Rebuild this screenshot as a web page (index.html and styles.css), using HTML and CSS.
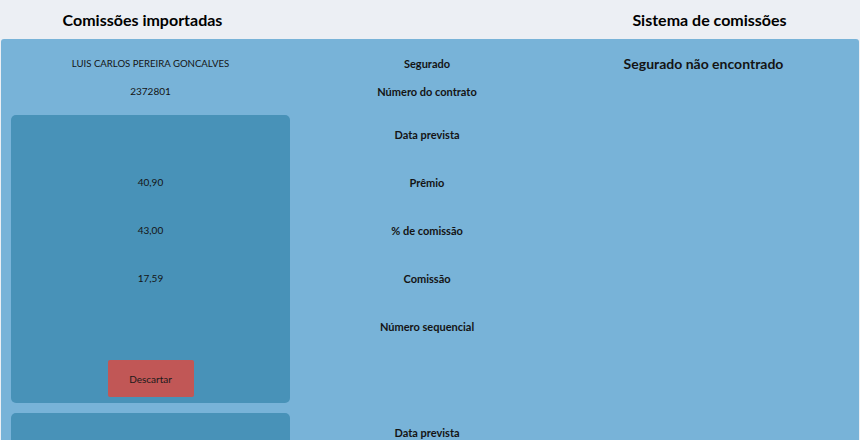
FILE: index.html
```html
<!DOCTYPE html>
<html lang="pt">
<head>
<meta charset="utf-8">
<title>Comissões</title>
<link rel="stylesheet" href="styles.css">
</head>
<body>
<header class="top">
  <h1 class="top-left">Comissões importadas</h1>
  <div class="top-gap"></div>
  <h1 class="top-right">Sistema de comissões</h1>
</header>
<main class="panel">
  <section class="col col-imported">
    <div class="line name">LUIS CARLOS PEREIRA GONCALVES</div>
    <div class="line">2372801</div>
    <div class="card">
      <div class="row"></div>
      <div class="row">40,90</div>
      <div class="row">43,00</div>
      <div class="row">17,59</div>
      <div class="row"></div>
      <div class="actions"><button class="btn-discard">Descartar</button></div>
    </div>
    <div class="card">
      <div class="row"></div>
      <div class="row"></div>
    </div>
  </section>
  <section class="col col-labels">
    <div class="line label">Segurado</div>
    <div class="line label">Número do contrato</div>
    <div class="label-block">
      <div class="row label">Data prevista</div>
      <div class="row label">Prêmio</div>
      <div class="row label">% de comissão</div>
      <div class="row label">Comissão</div>
      <div class="row label">Número sequencial</div>
    </div>
    <div class="label-block">
      <div class="row label">Data prevista</div>
    </div>
  </section>
  <section class="col col-system">
    <div class="line not-found">Segurado não encontrado</div>
  </section>
</main>
</body>
</html>
```

FILE: styles.css
```css
html, body {
  margin: 0;
  padding: 0;
  height: 100%;
  overflow: hidden;
}
body {
  background: #eceff4;
  font-family: Lato, "Liberation Sans", sans-serif;
  color: #141414;
}
.top {
  display: flex;
  height: 39px;
  align-items: center;
}
.top h1 {
  margin: 0;
  font-size: 16px;
  font-weight: 700;
  color: #000;
  text-align: center;
}
.top-left { width: 285px; }
.top-gap { flex: 1; }
.top-right { width: 301px; }

.panel {
  display: flex;
  margin-left: 1px;
  margin-right: 1px;
  height: 401px;
  background: #78b3d8;
  border-radius: 3px 3px 0 0;
  overflow: hidden;
}
.col {
  padding-top: 10px;
  box-sizing: border-box;
  text-align: center;
}
.col-imported {
  width: 299px;
  padding-left: 10px;
  padding-right: 10px;
  font-size: 10px;
}
.col-labels {
  width: 254px;
}
.col-system {
  flex: 1;
  padding-right: 6px;
}
.line {
  height: 28px;
  display: flex;
  align-items: center;
  justify-content: center;
}
.name {
  font-size: 9.6px;
}
.card {
  background: #4892b8;
  border-radius: 5px;
  margin-top: 10px;
  padding: 0 6px 6px;
  box-sizing: border-box;
  height: 288px;
  display: flex;
  flex-direction: column;
  gap: 10px;
}
.card + .card { margin-top: 10px; }
.row {
  height: 38px;
  flex: none;
  display: flex;
  align-items: center;
  justify-content: center;
}
.actions {
  display: flex;
  justify-content: center;
  margin-top: 5px;
}
.btn-discard {
  width: 86px;
  height: 37px;
  border: none;
  border-radius: 2px;
  background: #c15756;
  color: #1a1a1a;
  font-family: Lato, "Liberation Sans", sans-serif;
  font-size: 10px;
  cursor: pointer;
}
.label {
  font-weight: 700;
  font-size: 11px;
}
.label-block {
  height: 288px;
  margin-top: 10px;
  display: flex;
  flex-direction: column;
  gap: 10px;
}
.not-found {
  font-weight: 700;
  font-size: 14px;
}
```
